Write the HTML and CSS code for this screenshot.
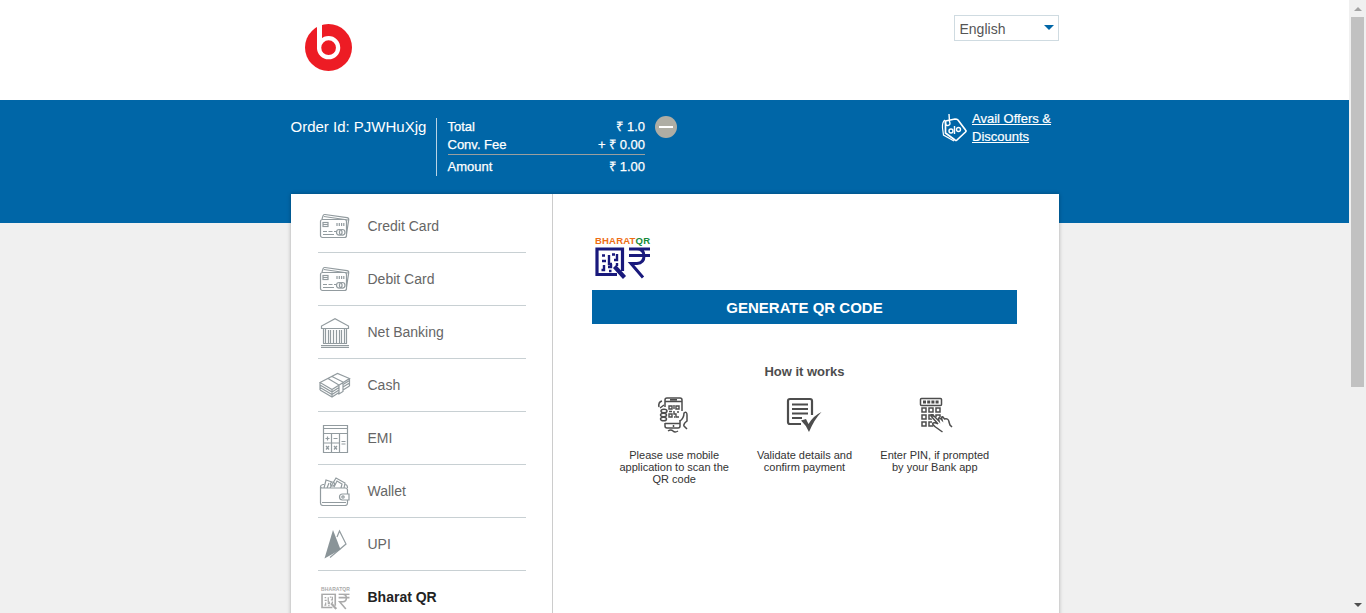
FILE: index.html
```html
<!DOCTYPE html>
<html lang="en">
<head>
<meta charset="utf-8">
<title>Payment</title>
<link rel="stylesheet" href="styles.css">
</head>
<body>
<svg class="defs" width="0" height="0">
  <symbol id="card" viewBox="0 0 32 30">
    <path d="M3 8 4 5Q4.300 3.300 6 3.500L28 6.700Q30 7 29.700 9L27.500 23M5 5.500l24 3.500"/>
    <rect x="1.500" y="8.500" width="26" height="18" rx="2"/>
    <rect x="4" y="11.500" width="5" height="4"/><path d="M4 13.500h5M18 12v3M20.300 12v3M22.600 12v3M24.800 12v3M4 20.500h4M9.500 20.500h4M15 20.500h2M4 23.500h11"/>
    <circle cx="20.300" cy="21.300" r="2.800"/><circle cx="23.200" cy="21.300" r="2.800"/>
  </symbol>
  <symbol id="qr" viewBox="0 0 56 32">
    <path fill="none" stroke="currentColor" stroke-width="3.200" d="M22 27.500H2V2h25.500V24"/>
    <path fill="none" stroke="currentColor" stroke-width="4.200" d="m19.500 19.500 10 11"/>
    <path fill="none" stroke="currentColor" stroke-width="2.400" d="M7 8.500h3M14 12v-4M17 7.500h3M22 7v6h-3M7 14h4M14 12v5h3M9 18v5H6.500M13 20h3v-3M22 16v3M14 24h2.500"/>
    <path fill="none" stroke="currentColor" stroke-width="3" d="M34 2h21M34 8.500h21M40 2h2q7 0 7 7t-7 7.500h-6L48 30.500"/>
  </symbol>
</svg>
<div class="window">
<div class="page">
  <header class="top">
    <div class="container top-row">
      <svg class="logo" viewBox="0 0 47 47"><circle cx="23.500" cy="23.500" r="23.500" fill="#ed1c24"/><path d="M12 0h5v24h-5z" fill="#fff"/><circle cx="23.600" cy="23.700" r="9.500" fill="#ed1c24" stroke="#fff" stroke-width="4.300"/></svg>
      <div class="language"><span>English</span><i></i></div>
    </div>
  </header>
  <section class="band">
    <div class="container band-row">
      <div class="order">Order Id: PJWHuXjg</div>
      <div class="totals">
        <div class="line"><span>Total</span><span>₹ 1.0</span></div>
        <div class="line"><span>Conv. Fee</span><span>+ ₹ 0.00</span></div>
        <div class="line sum"><span>Amount</span><span>₹ 1.00</span></div>
      </div>
      <div class="minus"><i></i></div>
      <a class="offers">
        <svg viewBox="0 0 26 30"><path d="M4 7Q1 9 1.500 15l1 7L13 28" fill="none" stroke="#fff" stroke-width="1.200"/><path d="M4.500 8 14 6q2 0 3 1l7.500 10q1 1 0 2L16 27q-1 1-2 0L4.500 20z" fill="#0066a7" stroke="#fff" stroke-width="1.700"/><g fill="none" stroke="#fff" stroke-width="1.400"><path d="M4.500 8Q4 13 7 12.500t1.500-4L8 1M13.500 13v8"/><circle cx="10" cy="18" r="2"/><circle cx="17.500" cy="16.500" r="2"/></g></svg>
        <span>Avail Offers &amp;<br>Discounts</span>
      </a>
    </div>
  </section>
  <main class="container panel">
    <nav class="methods">
      <a class="method"><svg class="icon"><use href="#card"/></svg>Credit Card</a>
      <a class="method"><svg class="icon"><use href="#card"/></svg>Debit Card</a>
      <a class="method"><svg class="icon bank" viewBox="0 0 32 30"><path d="M2.500 10.500V8L16 .8 29.500 8v2.500zM4 25.500h24M2 27.500h28M2 29.300h28M4.500 10.500v15M6.500 10.500v15M9.500 12v13.500M11.500 12v13.500M14.500 12v13.500M17.500 12v13.500M20.500 12v13.500M22.500 12v13.500M25.500 10.500v15M27.500 10.500v15"/></svg>Net Banking</a>
      <a class="method"><svg class="icon" viewBox="0 0 32 30"><path d="M1 12.500 18.500 3.500 30.500 8.500 13 19.500zM1 15l12 7 7-4.500M24 14.500l6.500-4M1 17.500l12 7 7-4.500M24 17l6.500-4M1 20l12 7 7-4.500M24 20l6.500-4M1 12.500V20M13 19.500V27M30.500 8.500V16M9 8.500l11 6.500v9l4-2.500V12L13 6.500"/></svg>Cash</a>
      <a class="method"><svg class="icon" viewBox="0 0 32 30"><path d="M4.500 2.500h24v27h-24zM4.500 5.500h24M4.500 10.500h24M12.500 10.500v19M20.500 10.500v19M4.500 20h16M6.500 15.500h4M8.500 13.500v4M14.500 15.500h4M22.500 18.500h4M22.500 21h4M7 23l3 3.500M10 23l-3 3.500M15 23l3 3.500M18 23l-3 3.500"/></svg>EMI</a>
      <a class="method"><svg class="icon" viewBox="0 0 32 30"><path d="M1.500 11v16q0 2.500 2.500 2.500h22q2.500 0 2.500-2.500V14q0-2-2.500-2H4Q1.500 12 1.500 10.500T4 8.500h1M26 8.500q2.500 0 2.500 3.500M5 12l2-8 6 2M8 12l2-5M11 12l6-10 9 5-1 5M15 11l3-6 5 3-1 4M3 26.500h24"/><circle cx="13.500" cy="8" r="2"/><path fill="#fff" d="M30 18h-6.500q-3 0-3 3t3 3H30z"/><circle cx="24" cy="21" r="1.200"/></svg>Wallet</a>
      <a class="method"><svg class="icon" viewBox="0 0 32 30"><path d="m18 8 2.500-6L27 15 11 28.500"/><path d="M14 1 21.500 20.500 5.500 29.500z" fill="#8a9498" stroke="none"/></svg>UPI</a>
      <a class="method active"><span class="icon small-qr"><b>BHARATQR</b><svg viewBox="0 0 56 32"><use href="#qr"/></svg></span>Bharat QR</a>
    </nav>
    <section class="content">
      <div class="brand"><div class="brand-name">BHARAT<span>QR</span></div><svg viewBox="0 0 56 32"><use href="#qr"/></svg></div>
      <button class="generate">GENERATE QR CODE</button>
      <h2>How it works</h2>
      <div class="steps">
        <div class="step">
          <svg viewBox="0 0 36 36"><g fill="none" stroke="#4d4d4d" stroke-width="1.500"><path d="M9 10V3q0-2 2-2h13q2 0 2 2v11M9 4.500h17M14 2.700h7M9 26v3q0 2 2 2h11q2 0 2-2v-6M9 26.500h15M17.500 28v2"/><path d="M3 10Q2 5 6 4M4 11l4-3"/><ellipse cx="8" cy="14" rx="3" ry="1.800"/><ellipse cx="7.500" cy="18" rx="3" ry="1.800"/><ellipse cx="7.500" cy="22" rx="3" ry="1.800"/><path d="M24 24q4-3 4-8 3-2 3 2v6q-4 3-3 5l3 3M12 34q3-2 5 0t5 0"/><path stroke-width="1.400" d="M13 9h3v3h-3zM20 9h3v3h-3zM13 17h3v3h-3zM18 14v3h2v3h3M13 14.500h3M18 8v4M21 15h2M18 20h1"/></g></svg>
          <p>Please use mobile application to scan the QR code</p>
        </div>
        <div class="step">
          <svg viewBox="0 0 36 36"><path d="M15 27H4q-2 0-2-2V4q0-2 2-2h20q2 0 2 2v14" fill="none" stroke="#4d4d4d" stroke-width="2.200"/><path d="M6 7.500h16M6 12h16M6 16.500h16M6 21h10" stroke="#4d4d4d" stroke-width="2"/><path d="m15 23.500 5-1.500 2.500 5Q27 19 35.500 15q-7 7-12.500 20-3-7-8-11.500z" fill="#4d4d4d"/></svg>
          <p>Validate details and confirm payment</p>
        </div>
        <div class="step">
          <svg viewBox="0 0 36 36"><g fill="none" stroke="#4d4d4d" stroke-width="1.500"><rect x="3.500" y="1.500" width="21" height="7" rx="1"/><path stroke-width="3" stroke-dasharray="3 1.200" d="M6 5h16.500"/><path d="M5 11h4v4H5zM12 11h4v4h-4zM19 11h4v4h-4zM5 18h4v4H5zM12 18h4v4h-4zM19 21v-3h4v2M5 25h4v4H5zM16 29h-4v-4h3"/><path fill="#fff" stroke="none" d="m14 20 4 9 8 6 6-6-4-9-8 0z"/><path d="m25.500 35-7-5q-4-3-2.500-4 2-1 5 1l-7-8q0-2 2-1l6 6q-1-4 1-3l2 2q-1-4 1-3l1.500 2q4-1 4.500 3l1 3 2 2"/></g></svg>
          <p>Enter PIN, if prompted by your Bank app</p>
        </div>
      </div>
    </section>
  </main>
</div>
<aside class="scrollbar"><i class="arrow-up"></i><i class="thumb"></i><i class="arrow-down"></i></aside>
</div>
</body>
</html>
```
FILE: styles.css
```css
* { box-sizing: border-box; }
body { margin: 0; overflow: hidden; font-family: "Liberation Sans", Arial, sans-serif; color: #4d4d4d; }
.defs { display: block; }
.window { display: flex; height: 613px; overflow: hidden; }
.page { width: 1349px; background: #f0f0f0; }
.container { width: 768px; margin-left: 291px; }
.top { height: 100px; background: #fff; }
.top-row { display: flex; justify-content: space-between; padding: 15px 0 0 14px; }
.logo { width: 47px; height: 47px; margin-top: 9px; }
.language { display: flex; justify-content: space-between; width: 105px; height: 26px; padding: 5px 4px 0 4.500px; border: 1px solid #cfdbe1; font-size: 14px; line-height: 17px; color: #555; }
.language i { height: 0; margin-top: 4px; border: 5px solid transparent; border-top-color: #0066a7; border-bottom: 0; }
.band { height: 123px; background: #0066a7; color: #fff; }
.band-row { display: flex; align-items: flex-start; padding-top: 18px; }
.order { width: 145px; padding-right: 1px; margin-left: -.5px; margin-right: .5px; font-size: 15px; line-height: 18px; white-space: nowrap; }
.totals { width: 209px; height: 58px; padding-left: 10.500px; border-left: 1px solid #b9d3e4; font-size: 13px; line-height: 18px; -webkit-text-stroke: .25px #fff; }
.line { display: flex; justify-content: space-between; }
.sum { padding-top: 3px; border-top: 1px solid #9b9f9e; }
.minus { display: flex; align-items: center; justify-content: center; width: 22px; height: 22px; margin: -2px 0 0 10px; border-radius: 50%; background: #aeada4; }
.minus i { width: 14px; height: 2px; background: #fff; }
.offers { display: flex; gap: 5px; margin: -8px 0 0 264px; font-size: 13px; line-height: 18px; text-decoration: underline; white-space: nowrap; -webkit-text-stroke: .2px #fff; }
.offers svg { width: 26px; height: 30px; margin-top: 3px; }
.offers span { text-underline-offset: 1px; }
.panel { display: flex; height: 440px; margin-top: -29px; background: #fff; box-shadow: 0 0 4px rgba(0,0,0,.3); }
.methods { width: 262px; padding: 6px 26px 0 27px; border-right: 1px solid #ccc; }
.method { display: flex; align-items: center; height: 53px; border-bottom: 1px solid #c8d0d3; font-size: 14px; color: #666; }
.active { color: #222; font-weight: bold; }
.icon { width: 32px; height: 30px; margin: 0 16.500px 0 1px; fill: none; stroke: #929b9f; stroke-width: 1.200; }
.bank { margin-top: 2px; }
.small-qr { padding: 4px 0 0 2px; color: #aaa; stroke: none; }
.small-qr b { display: block; font: bold 5px/6px "Liberation Sans", sans-serif; letter-spacing: .1px; }
.small-qr svg { display: block; width: 29px; height: 17px; margin-top: 1px; }
.content { width: 506px; padding: 42px 42px 0 39px; }
.brand { width: 56px; margin-left: 3px; color: #19197c; }
.brand-name { font: bold 9.500px/10px "Liberation Sans", sans-serif; letter-spacing: .2px; color: #ee6d13; white-space: nowrap; }
.brand-name span { color: #168a38; }
.brand svg { display: block; width: 56px; height: 32px; margin-top: 1px; }
.generate { display: block; width: 425px; height: 34px; margin: 11px 0 0; padding: 0; border: 0; background: #0066a7; color: #fff; font: bold 15px "Liberation Sans", sans-serif; }
h2 { margin: 40px 0 0; font-size: 13px; line-height: 16px; text-align: center; }
.steps { display: flex; justify-content: center; padding-top: 17px; }
.step { display: flex; flex-direction: column; align-items: center; width: 130.300px; font-size: 11px; line-height: 12px; text-align: center; }
.step svg { width: 36px; height: 36px; }
.step p { width: 115px; margin: 16px 0 0; color: #333; }
.scrollbar { display: flex; flex-direction: column; align-items: center; width: 17px; padding: 7px 0 6px; background: #f0f0f0; }
.arrow-up { border: 4px solid transparent; border-top: 0; border-bottom-color: #a3a3a3; }
.thumb { width: 13px; height: 370px; margin: 6px 0 auto; background: #c1c1c1; }
.arrow-down { border: 4px solid transparent; border-bottom: 0; border-top-color: #505050; }
```
